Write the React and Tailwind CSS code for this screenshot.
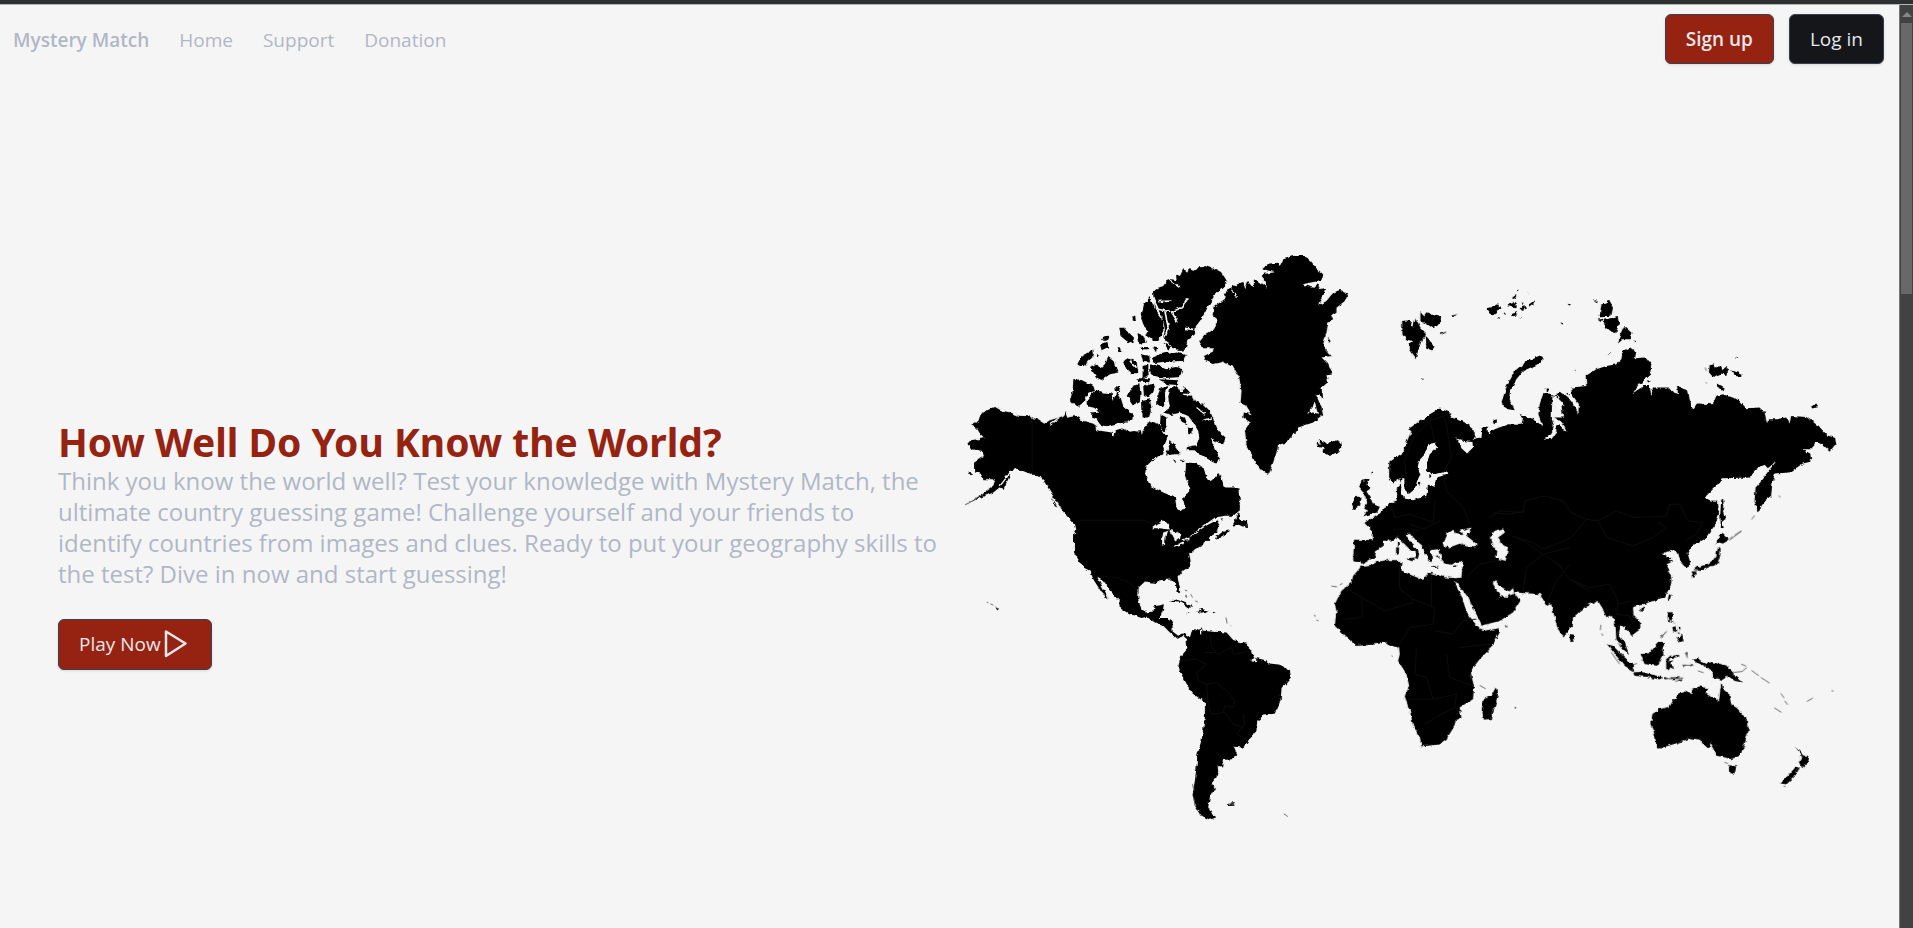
const navLinks = ['Home', 'Support', 'Donation'];

/* Each sheet is one part of the map, drawn on its own grid at three units per map unit. */
const sheets = [
  {
    at: 'translate(950 240) scale(0.33333)',
    land: [
      // Alaska and Canada
      'M63 552L85 540 92 520 112 508 135 498 152 508 185 516 205 524 232 526 262 535 283 548 300 538 320 532 340 525 345 513 352 530 375 525 400 540 430 548 440 556 437 566 465 568 488 570 492 590 498 566 515 560 540 572 572 568 576 582 582 560 600 540 625 548 640 578 655 580 650 600 640 620 646 640 655 612 690 640 708 665 735 665 765 685 770 710 785 722 805 695 815 715 830 750 865 780 870 800 868 830 830 835 780 860 780 900 372 900 380 870 375 850 345 820 325 790 300 750 275 710 245 700 200 683 180 690 165 720 150 738 130 755 80 775 45 793 90 765 125 740 138 715 100 715 95 700 72 690 72 665 102 645 98 630 65 625 52 608 62 598 104 592 90 578 82 565Z',
      'M165 715L182 700 160 745 148 740ZM305 770L322 800 314 796ZM288 720L310 745 322 775 306 760Z',
    ],
    water: [
      'M640 640L610 655 590 675 585 700 600 735 640 755 675 770 680 800 695 812 705 800 700 775 718 750 715 725 705 705 708 680 708 662 740 668 762 680 770 710 785 722 803 700 804 662 750 640 740 600 748 570 720 530 690 522 660 530 648 560 655 585 645 610Z',
      'M436 556L490 552 560 560 585 570 560 572 520 562 496 566 486 575 440 568Z',
    ],
    over: [
      // Ellesmere, Axel Heiberg, Devon
      'M608 150L625 140 640 135 650 120 665 115 680 118 678 100 690 105 700 85 712 95 718 82 735 88 745 76 765 75 795 85 815 95 830 118 825 135 800 155 780 185 765 215 750 240 738 255 735 280 712 300 708 325 690 330 665 320 650 300 640 290 645 265 640 240 630 215 615 195 612 175Z',
      'M600 168L582 190 573 230 582 255 595 270 590 285 610 300 625 300 640 270 640 240 622 215 610 190Z',
      'M604 350L640 337 680 332 708 342 698 360 650 362 615 366ZM600 375L622 370 650 385 680 378 697 385 690 408 640 412 603 403Z',
      // Parry Islands
      'M547 225L556 228 558 238 549 236ZM508 260L525 260 540 278 552 290 550 310 530 300 512 285ZM560 278L580 285 588 305 565 310ZM452 292L475 281 480 295 462 300ZM450 310L472 302 475 318 455 328ZM382 370L395 345 430 326 432 345 415 360 405 375 390 375ZM420 378L440 368 452 385 465 372 475 348 490 360 500 375 505 395 480 400 455 417 440 410 430 395ZM518 360L535 352 560 365 565 395 545 400 530 385ZM572 340L598 345 600 362 580 360ZM578 375L595 370 596 405 578 412ZM503 318L510 320 515 337 507 332ZM575 318L598 318 595 326 577 325ZM608 318L622 322 618 334ZM438 338L448 345 442 350ZM640 305L665 318 655 326ZM560 412L600 412 598 424 562 422ZM625 415L685 418 680 432 655 430Z',
      // Banks, Victoria, Prince of Wales, Somerset, Boothia
      'M370 418L390 415 410 425 430 435 435 450 412 460 405 480 385 497 370 490 360 478 368 450Z',
      'M410 482L425 460 440 448 460 455 485 457 488 480 500 450 512 470 520 495 548 520 548 535 530 545 500 548 470 556 450 550 440 535 425 530 423 515 452 512 430 500 412 497Z',
      'M530 465L550 435 568 430 572 455 570 480 550 492 540 478ZM580 435L600 428 615 435 610 455 595 470 582 465ZM576 480L600 475 606 510 600 530 578 530ZM495 436L512 438 508 450 498 450Z',
      // Baffin
      'M655 435L632 443 622 465 622 490 640 502 646 480 645 455Z',
      'M660 445L680 435 692 455 705 438 720 455 735 480 760 490 780 510 795 545 805 570 827 590 820 610 795 600 782 592 800 630 808 650 800 668 775 655 750 640 735 628 710 628 712 618 740 612 748 590 745 570 730 545 715 525 690 515 665 522 640 515 660 500 655 470Z',
      'M713 560L728 563 728 578 715 576ZM662 600L682 622 692 640 672 640 648 644ZM666 655L678 660 674 667ZM692 655L704 658 698 665ZM690 525L705 530 712 550 690 540ZM632 520L650 530 645 575 630 560Z',
      'M55 694L70 700 62 703Z',
    ],
  },
  {
    at: 'translate(1180 240) scale(0.33333)',
    land: [
      // Greenland
      'M58 300L75 280 105 262 112 235 98 222 105 195 138 172 132 160 150 140 190 122 196 145 205 120 222 140 222 112 262 140 245 100 285 94 248 84 265 68 290 65 300 75 310 55 345 44 375 45 395 62 408 80 430 100 428 115 405 122 368 130 400 140 412 130 422 145 438 140 435 165 420 192 440 180 460 155 480 147 503 160 495 180 470 200 470 215 455 225 460 238 445 245 440 275 430 310 437 325 455 345 425 350 440 365 460 398 440 400 445 425 425 440 430 470 408 460 425 500 430 520 400 545 355 560 340 585 320 605 295 612 290 635 280 665 268 700 245 690 228 670 215 640 200 610 195 570 212 545 190 530 192 515 215 520 200 495 182 487 185 450 178 410 160 380 130 362 100 370 82 362 72 345 100 332 100 322 70 322Z',
      // Iceland, Svalbard
      'M410 605L425 612 415 598 432 600 445 608 470 598 485 605 487 620 470 635 450 645 428 635 432 622 415 618Z',
      'M667 240L690 238 700 260 708 232 722 260 742 280 725 300 708 352 690 325 690 310 700 300 680 295 668 278ZM722 213L732 225 740 214 760 222 785 228 780 250 760 262 740 248 722 240ZM738 285L748 295 755 308 765 318 755 328 740 322Z',
      'M818 222L832 222 822 226ZM780 278L802 273 782 283ZM724 415L730 417 725 420ZM445 290L452 300 448 310Z',
      // British Isles
      'M545 720L567 716 560 732 573 742 560 752 572 770 580 790 600 798 592 815 550 826 565 810 553 803 563 785 550 755 538 740ZM530 768L546 768 540 795 518 808 515 790ZM574 690L580 694 577 702Z',
      // Scandinavia and northern Europe
      'M628 665L650 648 670 635 682 600 695 570 685 565 720 540 750 520 780 503 810 515 815 530 850 542 880 565 888 590 870 602 845 590 825 585 850 625 880 615 890 600 912 595 905 557 922 557 925 580 960 560 960 900 580 900 578 870 555 848 590 832 620 795 655 782 648 745 665 730 660 712 640 725 628 710Z',
      'M940 540L950 535 952 548 943 550Z',
    ],
    water: [
      'M745 610L768 605 772 620 750 640 742 665 742 690 760 700 803 692 806 700 770 710 765 738 745 732 740 765 700 778 672 772 690 757 705 745 712 720 722 700 714 680 717 660 735 640Z',
      'M664 712L674 712 674 745 688 760 680 775 664 770ZM822 588L850 600 878 603 880 620 862 638 845 622 838 600Z',
      'M438 132L446 140 440 165 418 195 432 160ZM150 135L172 168 165 166ZM382 518L400 515 425 520 412 512 405 480 398 500Z',
    ],
    over: ['M648 740L665 738 662 752 672 768 660 780 650 770Z', 'M712 730L722 725 718 740Z', 'M748 700L758 702 750 712Z'],
  },
  {
    at: 'translate(1440 270) scale(0.33333)',
    land: [
      // Russia and Central Asia
      'M0 415L20 425 45 450 75 455 105 485 100 508 125 502 128 468 145 468 140 492 165 475 205 460 245 462 250 440 235 428 270 440 290 450 310 468 296 430 300 400 310 370 325 368 340 370 345 400 340 440 370 440 365 400 345 372 362 362 385 378 410 405 415 430 418 400 396 370 395 350 440 345 438 315 470 295 500 285 530 280 545 265 550 240 570 228 590 245 585 262 620 260 635 280 632 310 605 335 578 368 612 345 630 345 635 375 640 350 690 350 700 365 715 370 712 345 745 355 750 385 760 415 772 398 820 400 830 375 850 370 895 385 920 412 960 410 975 425 983 458 985 445 1010 445 1040 440 1050 458 1055 435 1100 438 1130 460 1160 492 1190 502 1192 515 1172 540 1150 522 1130 515 1120 535 1088 535 1112 548 1116 572 1090 578 1050 605 1005 608 998 640 995 675 975 690 955 725 945 690 948 650 970 625 985 603 1010 572 985 592 975 582 945 597 935 620 850 622 825 650 795 680 815 690 835 690 838 730 825 765 795 805 760 822 742 848 752 885 740 890 722 870 715 845 690 835 668 850 695 862 680 880 690 900 0 900Z',
      // Novaya Zemlya
      'M185 395L200 350 225 300 255 275 290 258 305 252 312 265 290 282 250 300 230 325 215 355 210 385 225 418 205 415 190 405Z',
      // Severnaya Zemlya, New Siberian Islands, Wrangel
      'M485 100L500 98 505 83 520 110 515 134 480 136ZM492 146L535 138 538 155 530 187 510 180 495 168ZM472 143L490 140 488 150ZM553 165L575 185 575 205 550 205 535 218 542 190ZM583 208L592 212 588 214Z',
      'M810 283L825 280 830 290 845 283 848 298 858 288 866 298 860 312 845 308 820 318 808 305ZM875 298L905 308 905 318 885 315ZM832 336L855 350 852 358 838 352ZM797 290L801 300ZM1115 407L1130 398 1138 408 1118 413Z',
      // Franz Josef Land
      'M138 112L160 108 175 100 182 112 165 130 150 128ZM205 97L220 92 232 105 225 112 205 105ZM220 75L228 70 232 82 218 84ZM245 95L254 95 252 102ZM240 112L255 103 262 112 248 120ZM265 102L285 88 280 105ZM218 128L235 122 228 134 218 136ZM192 128L198 124 198 132ZM232 55L240 58 234 61ZM263 62L272 64 266 67ZM174 138L182 140 178 144ZM238 138L244 140 240 143Z',
      'M384 98L394 100 388 104ZM362 154L374 158 368 162ZM462 87L476 90 470 93ZM890 260L896 262 892 264ZM160 450L170 446 172 456 162 458ZM505 250L514 244 510 252ZM402 298L408 300 406 304ZM622 328L634 330 625 335ZM318 352L328 354 325 362 318 360ZM380 366L388 366 384 372ZM1000 625L1008 627 1002 630Z',
      // Sakhalin
      'M845 685L852 690 850 720 858 745 848 750 853 775 844 772 842 730Z',
    ],
    water: [
      'M338 372L346 390 344 440 365 452 376 468 380 482 370 478 362 462 350 465 350 485 335 505 312 503 335 490 342 465 336 440Z',
      'M352 362L358 385 378 405 365 402 352 388ZM385 378L412 400 418 432 408 410Z',
    ],
    over: [],
  },
  {
    at: 'translate(950 500) scale(0.33333)',
    land: [
      // United States, Mexico, Central America
      'M310 -40L340 0 350 30 380 55 383 80 372 100 372 155 400 200 420 210 430 235 455 275 476 297 470 280 445 235 440 226 455 235 480 270 507 300 510 322 540 340 575 352 590 348 615 365 640 375 660 395 685 415 700 405 710 415 712 440 722 430 722 412 715 405 700 398 685 405 668 392 668 360 655 352 630 352 640 325 642 310 615 316 610 332 590 335 575 325 565 300 566 260 585 242 620 247 625 238 665 236 678 250 680 270 690 278 690 260 683 230 700 210 720 195 722 180 718 160 735 145 760 130 765 115 790 102 815 90 840 60 868 30 870 0 865 -40Z',
      // South America
      'M712 425L720 410 725 392 755 380 760 390 790 393 830 395 850 418 890 430 908 455 912 470 945 478 960 488 990 492 1020 508 1023 530 995 565 992 600 975 638 940 645 922 660 920 690 895 720 880 740 852 738 862 760 850 775 822 778 820 797 803 797 805 812 800 830 785 848 795 862 780 890 775 920 785 940 800 950 780 957 755 945 735 915 728 880 735 840 740 800 742 765 755 720 765 650 765 605 725 575 705 540 685 505 690 470 712 445Z',
      // Caribbean and remote islands
      'M660 303L680 296 710 308 733 320 715 320 695 306ZM738 333L752 330 748 322 776 330 755 336ZM708 333L720 335 710 337ZM788 332L797 334 790 337ZM706 283L710 286 709 292ZM138 320L147 324 141 329ZM834 910L855 907 850 915 838 916Z',
    ],
    water: [
      'M606 82L635 60 645 60 658 75 655 86 630 82ZM640 95L655 90 647 110 645 132 636 135 637 110ZM655 86L690 98 692 110 676 122 665 100ZM670 134L700 122 698 130 672 138ZM698 115L720 110 718 118 700 120Z',
      'M720 106L765 72 795 50 825 45 850 45 870 28 850 70 836 88 815 96 800 92 808 72 800 58 770 74 722 108Z',
      'M900 478L920 470 918 482ZM750 388L757 385 757 402 751 398Z',
    ],
    over: ['M848 74L865 36 868 55 888 60 892 82 870 72ZM795 112L815 95 838 88 830 98 800 116ZM810 52L822 54 814 57Z'],
  },
  {
    at: 'translate(1310 480) scale(0.33333)',
    land: [
      // Europe, Middle East, Africa
      'M780 -20L600 -20 380 20 350 50 280 55 240 65 205 105 165 122 190 150 190 178 133 176 130 238 152 242 155 252 150 262 130 285 125 305 95 330 75 370 80 390 75 435 105 465 140 495 185 492 230 485 240 495 268 500 270 520 265 540 290 580 298 615 285 650 300 690 310 735 330 770 335 797 385 792 410 775 435 735 438 718 455 712 450 680 490 655 493 620 483 570 510 535 545 500 570 455 570 442 520 450 513 435 570 420 610 395 632 360 612 335 690 340 712 375 725 368 735 410 760 468 775 455 790 430Z',
      'M558 620L566 640 555 680 542 718 520 720 515 695 522 655 545 645ZM586 436L594 437 588 440ZM616 678L620 680 617 684Z',
    ],
    water: [
      'M150 250L165 246 195 228 200 208 222 195 222 180 250 178 265 168 280 185 305 210 322 215 312 232 325 235 328 220 325 208 300 182 288 160 300 155 318 178 338 195 345 215 360 245 370 235 362 208 388 205 395 230 402 247 425 252 440 243 460 242 455 290 440 292 405 290 375 280 355 275 340 297 310 285 275 270 278 245 265 238 235 238 205 242 180 255 155 258Z',
      'M432 302L445 310 475 350 492 385 515 430 520 452 508 440 490 422 470 392 455 345Z',
      'M550 300L560 303 580 325 600 332 610 322 614 338 592 348 572 347 560 325 550 310Z',
      'M400 190L415 155 430 145 440 160 458 163 452 150 484 140 484 150 468 163 500 188 497 200 470 197 450 188 420 200 402 197Z',
      'M540 168L555 150 583 142 585 155 565 170 575 190 595 200 588 240 556 232 560 210 545 185Z',
    ],
    over: ['M261 186L267 184 267 196 262 196ZM259 200L268 200 267 220 259 222ZM288 234L312 230 308 242ZM366 257L386 257 384 261 368 261ZM430 256L444 252 436 260ZM378 222L388 232 382 234Z'],
  },
  {
    at: 'translate(1550 500) scale(0.33333)',
    land: [
      // South and East Asia
      'M-60 0L500 0 505 30 485 85 450 125 430 122 410 145 422 185 415 200 402 195 400 165 388 152 370 145 358 150 335 160 345 172 372 180 348 192 365 230 365 250 345 290 300 305 275 312 250 320 252 345 272 365 272 385 245 405 235 388 210 370 205 400 225 425 238 460 220 445 200 415 198 380 190 345 170 352 160 325 145 300 110 315 65 355 60 385 42 410 25 385 10 330 0 300 -60 200Z',
      'M60 402L72 405 74 422 62 424ZM272 323L286 316 280 333 272 330ZM358 285L366 281 360 302 355 296Z',
      // Japan
      'M498 130L512 100 520 100 538 118 520 128 505 124ZM505 140L513 145 512 165 503 192 480 198 455 210 432 208 440 200 470 192 490 178 500 165ZM426 212L438 212 437 224 432 234ZM442 212L455 206 452 214Z',
      // Indonesia and the Philippines
      'M172 430L190 435 225 470 250 490 250 511 225 495 200 465ZM250 515L275 513 310 522 340 530 330 536 290 528 255 525Z',
      'M273 460L300 457 330 420 347 430 338 445 342 462 325 495 285 490Z',
      'M350 474L362 465 390 462 385 469 360 472 358 482 372 478 362 488 374 506 362 500 358 508 350 508Z',
      'M345 528L358 534 346 536ZM362 530L392 530 385 535 365 535ZM380 542L402 530 392 542ZM408 455L414 455 412 472ZM400 493L414 493 402 497ZM420 490L434 493 422 497Z',
      'M355 335L368 334 370 350 364 362 380 370 356 362 354 350ZM380 408L392 408 397 400 402 420 390 425ZM368 380L378 376 380 392 372 396ZM384 378L393 380 390 392ZM334 408L352 388 336 410ZM380 396L388 394 390 400Z',
      'M430 476L450 473 455 483 470 490 478 482 530 494 550 515 558 528 578 545 555 540 535 525 515 537 488 530 490 515 465 495 440 485Z',
      // Australia and New Zealand
      'M308 640L330 625 360 618 370 600 390 578 405 572 425 580 428 565 450 557 432 553 476 562 468 578 490 592 508 600 515 548 525 570 538 578 545 610 565 625 595 660 597 690 585 730 572 765 545 775 500 765 490 745 484 735 470 740 455 718 425 712 380 728 340 740 320 740 318 715 305 665Z',
      'M535 793L560 797 555 818 545 823ZM738 738L755 755 762 768 780 768 775 785 758 802 748 785 758 770ZM740 797L750 802 735 828 710 852 693 848 715 825Z',
    ],
    water: ['M484 722L488 735 480 750 474 748 480 735Z'],
    over: [],
  },
];

/* Island chains too thin for a filled outline. */
const chains = [
  { at: 'translate(950 500) scale(0.33333)', d: 'M110 304L115 306M121 309L130 313M136 318L145 325M705 268L712 270M708 282L710 290M722 280L728 290M736 300L744 304M828 350L832 368M842 374L844 376M1002 940L1008 943L1014 948M835 910L853 909M45 12L64 2M736 808L738 800M728 850L732 870M732 895L736 915' },
  { at: 'translate(1440 270) scale(0.33333)', d: 'M870 804L880 797M885 793L905 781M936 746L945 734M1018 674L1022 680M797 290L800 300M798 334L802 338M38 135L52 130M2 189L20 183' },
  { at: 'translate(1310 480) scale(0.33333)', d: 'M65 316L82 318M90 312L98 308M12 404L18 406M20 418L26 420M510 614L528 624M586 437L594 438M617 678V684M246 524L248 528' },
  { at: 'translate(1550 500) scale(0.33333)', d: 'M154 372L152 388M156 398L160 405M185 455L210 490M552 515L578 512 592 500M575 490L590 496M606 509L628 525M634 530L660 547M674 621L696 635M694 578L704 592M706 600L714 612M772 602L790 592M846 570L852 571M345 534L400 532M378 543L400 532M398 493L432 494M408 456L414 472M352 392L334 410M445 510L462 516M250 492L262 488M525 785L535 788M702 856L708 858M540 118L576 90' },
];

const borders = [
  { at: 'translate(950 240) scale(0.33333)', d: 'M247 528V700M385 838H580L610 850' },
  { at: 'translate(950 500) scale(0.33333)', d: 'M435 225L500 230 540 245 562 272M780 400L785 440 805 460 845 440 850 460 905 450M690 480L740 475 770 490 740 515 745 540 770 550 775 610 785 640 825 635 850 670 880 680M770 550L800 545 835 575 855 600 850 620 825 615 820 635M880 640L885 670 860 700 890 715M765 455L800 455' },
  { at: 'translate(1310 480) scale(0.33333)', d: 'M105 320L225 390 310 365 305 350 270 325 268 260M155 350L158 410 100 415M310 355L375 380 370 430 300 440 270 490M375 450L430 460 460 420 500 415M450 500L540 490M320 500L315 580 350 590 370 655 290 655M410 520L420 590 490 615M370 655L440 640 435 680 395 700 345 730M365 285V380M245 70L255 110 300 100 370 125 375 60M300 130L340 145 390 120M250 145L290 145 330 150M645 90L600 100 550 95M610 165L650 185 700 220 780 200M470 290L510 250 560 240M640 330L650 260 700 220M710 370L740 300 780 250' },
  { at: 'translate(1440 270) scale(0.33333)', d: 'M150 740L180 720 250 725 255 690 315 675 370 690 395 725 440 745 475 750 530 720 580 740 680 735 690 700 720 700 745 750 790 755 770 790 740 808M475 750L500 800 580 825 640 800 680 770 655 755M440 745L395 800 310 835 280 815 215 795M310 850L370 890' },
  { at: 'translate(1550 500) scale(0.33333)', d: 'M25 190L60 235 120 260 180 250 200 290 205 310 245 300M60 235L125 275M205 310L200 340 240 345 250 370' },
  { at: 'translate(1180 240) scale(0.33333)', d: 'M680 735L675 660 700 590 750 540 790 525 800 550 815 650 790 695M750 540L765 600M790 700L800 750 850 800 870 850' },
];

function WorldMap() {
  return (
    <svg viewBox="950 250 892 586" className="block h-auto w-full" role="img" aria-label="World map">
      <defs>
        <filter id="coast" x="0" y="0" width="100%" height="100%" colorInterpolationFilters="sRGB">
          <feTurbulence type="fractalNoise" baseFrequency="0.22" numOctaves="2" seed="4" result="n" />
          <feDisplacementMap in="SourceGraphic" in2="n" scale="4" xChannelSelector="R" yChannelSelector="G" />
          <feGaussianBlur stdDeviation="0.4" />
        </filter>
      </defs>
      <g filter="url(#coast)">
        {['land', 'water', 'over'].map((layer) =>
          sheets.map((s, i) => (
            <g key={layer + i} transform={s.at} fill={layer === 'water' ? '#f5f5f5' : '#000'}>
              {s[layer].map((d) => (
                <path key={d} d={d} />
              ))}
            </g>
          )),
        )}
        {/* Fjords of the Arctic islands */}
        <g transform="translate(950 240) scale(0.33333)" fill="none" stroke="#f5f5f5" strokeWidth="5">
          <path d="M608 170L625 205 665 213 695 200 712 172M645 210L655 260 640 300M665 213L685 245M625 182L665 180M660 118L690 140M790 165L810 160M700 460L725 462M730 265L705 262M560 380L540 360M495 570L490 585" />
          <path strokeWidth="4" d="M740 500L765 520M760 540L785 530M300 550L328 530M150 735L185 690" />
        </g>
      </g>
      <g fill="none" stroke="#6b6b6b" strokeWidth="3">
        {chains.map((c) => (
          <path key={c.at} transform={c.at} d={c.d} />
        ))}
      </g>
      <g fill="none" stroke="#0f0f0f" strokeWidth="3">
        {borders.map((b) => (
          <path key={b.at} transform={b.at} d={b.d} />
        ))}
      </g>
    </svg>
  );
}

const button =
  'flex items-center rounded-md border border-[#374151] px-5 text-[19px] leading-[26px] text-gray-200 shadow-sm';

export default function App() {
  return (
    <div className="flex h-screen flex-col overflow-hidden bg-[#f5f5f5] font-['Open_Sans','Noto_Sans',sans-serif] text-[#b0b7c7]">
      <div className="h-[5px] shrink-0 border-b border-[#b4b4b4] bg-[#2e2f33]" />
      <div className="flex min-h-0 flex-1">
        <div className="min-w-0 flex-1 overflow-hidden">
          <header className="flex h-[75px] items-start justify-between pt-[9px] pr-[15px] pl-[13px]">
            <nav className="flex h-[52px] items-center gap-[30px] text-[19px] leading-[26px]">
              <a href="#top" className="font-semibold">Mystery Match</a>
              {navLinks.map((label) => (
                <a key={label} href={'#' + label.toLowerCase()}>{label}</a>
              ))}
            </nav>
            <div className="flex gap-[15px]">
              <button type="button" className={button + ' h-[50px] bg-[#962311] font-semibold'}>Sign up</button>
              <button type="button" className={button + ' h-[50px] bg-[#14161a]'}>Log in</button>
            </div>
          </header>
          <main className="grid min-h-screen grid-cols-2 items-center px-[58px]">
            <section className="flex flex-col items-start pr-2">
              <h1 className="font-['Noto_Sans','Open_Sans',sans-serif] text-[39px] leading-[46px] font-bold text-[#962311]">
                How Well Do You Know the World?
              </h1>
              <p className="text-[24px] leading-[31px]">
                Think you know the world well? Test your knowledge with Mystery Match, the ultimate country guessing
                game! Challenge yourself and your friends to identify countries from images and clues. Ready to put your
                geography skills to the test? Dive in now and start guessing!
              </p>
              <button type="button" className={button + ' mt-[30px] h-[51px] bg-[#962311]'}>
                Play Now
                <svg viewBox="0 0 30 30" className="size-[30px]" fill="none" stroke="#e5e7eb" strokeWidth="2.5" strokeLinejoin="round" aria-hidden="true">
                  <path d="M5 2.500V27L24.500 14.500Z" />
                </svg>
              </button>
            </section>
            <WorldMap />
          </main>
        </div>
        <div className="flex w-[14px] shrink-0 flex-col items-center border-l border-[#777777] bg-[#424242] pt-[7px]" aria-hidden="true">
          <svg viewBox="0 0 10 5" className="h-[5px] w-[10px] shrink-0" fill="#868686">
            <path d="M5 0L10 5H0Z" />
          </svg>
          <div className="mt-[6px] h-[271px] w-[11px] shrink-0 bg-[#686868]" />
        </div>
      </div>
    </div>
  );
}
